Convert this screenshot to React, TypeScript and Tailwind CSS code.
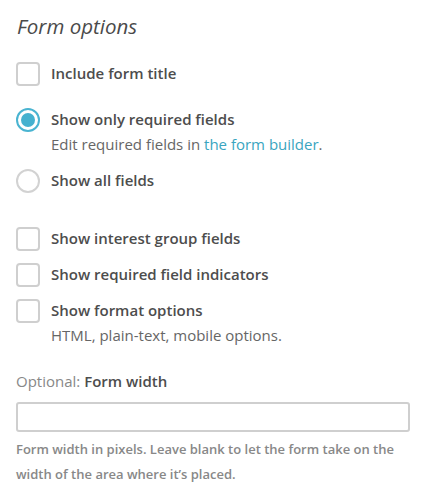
import { useState } from 'react';

function Checkbox({ checked, onChange }: { checked: boolean; onChange: () => void }) {
  return (
    <button
      onClick={onChange}
      className="w-[24px] h-[24px] shrink-0 rounded-[4px] border-2 border-[#cfcfcf] bg-white flex items-center justify-center"
    >
      {checked && <span className="w-[12px] h-[12px] rounded-[2px] bg-[#45b1cf]" />}
    </button>
  );
}

function Radio({ checked, onChange }: { checked: boolean; onChange: () => void }) {
  return (
    <button
      onClick={onChange}
      className={`w-[24px] h-[24px] shrink-0 rounded-full border-2 bg-white flex items-center justify-center ${
        checked ? 'border-[#4ab4d1]' : 'border-[#d2d2d2]'
      }`}
    >
      {checked && <span className="w-[14px] h-[14px] rounded-full bg-[#45b1cf]" />}
    </button>
  );
}

export default function App() {
  const [title, setTitle] = useState(false);
  const [fields, setFields] = useState<'required' | 'all'>('required');
  const [opts, setOpts] = useState({ interest: false, indicators: false, format: false });
  const [width, setWidth] = useState('');

  const toggle = (k: keyof typeof opts) => setOpts((o) => ({ ...o, [k]: !o[k] }));

  return (
    <div className="w-[421px] h-[503px] bg-white px-[16px] pt-[12px] font-['Open_Sans',sans-serif]">
      <h2 className="text-[20.5px] leading-[28px] italic text-[#4a4a4a] pl-px">Form options</h2>

      {/* Title checkbox */}
      <div className="mt-[22px] flex items-start gap-[11px]">
        <Checkbox checked={title} onChange={() => setTitle((t) => !t)} />
        <span className="text-[15px] leading-[22px] font-semibold text-[#4d4d4d]">Include form title</span>
      </div>

      {/* Field radios */}
      <div className="mt-[22px] flex items-start gap-[11px]">
        <Radio checked={fields === 'required'} onChange={() => setFields('required')} />
        <div>
          <div className="text-[15px] leading-[22px] font-semibold text-[#4d4d4d]">Show only required fields</div>
          <div className="text-[15px] leading-[28px] text-[#666]">
            Edit required fields in <a href="#" className="text-[#3aa5c0]">the form builder</a>.
          </div>
        </div>
      </div>
      <div className="mt-[11px] flex items-start gap-[11px]">
        <Radio checked={fields === 'all'} onChange={() => setFields('all')} />
        <span className="text-[15px] leading-[22px] font-semibold text-[#4d4d4d]">Show all fields</span>
      </div>

      {/* Other options */}
      <div className="mt-[34px] flex flex-col gap-[12px]">
        <div className="flex items-start gap-[11px]">
          <Checkbox checked={opts.interest} onChange={() => toggle('interest')} />
          <span className="text-[15px] leading-[22px] font-semibold text-[#4d4d4d]">Show interest group fields</span>
        </div>
        <div className="flex items-start gap-[11px]">
          <Checkbox checked={opts.indicators} onChange={() => toggle('indicators')} />
          <span className="text-[15px] leading-[22px] font-semibold text-[#4d4d4d]">Show required field indicators</span>
        </div>
        <div className="flex items-start gap-[11px]">
          <Checkbox checked={opts.format} onChange={() => toggle('format')} />
          <div>
            <div className="text-[15px] leading-[22px] font-semibold text-[#4d4d4d]">Show format options</div>
            <div className="text-[15px] leading-[28px] text-[#666]">HTML, plain-text, mobile options.</div>
          </div>
        </div>
      </div>

      {/* Form width */}
      <div className="mt-[20px] text-[15px] leading-[24px] text-[#888]">
        Optional: <span className="font-semibold text-[#4d4d4d]">Form width</span>
      </div>
      <input
        type="text"
        value={width}
        onChange={(e) => setWidth(e.target.value)}
        className="mt-[9px] block w-[394px] h-[30px] border-2 border-[#cfcfcf] rounded-[3px] px-2 text-[15px] text-[#444] focus:outline-none"
      />
      <p className="mt-[5px] text-[13px] leading-[25px] font-semibold text-[#888]">
        Form width in pixels. Leave blank to let the form take on the width of the area where it’s placed.
      </p>
    </div>
  );
}
